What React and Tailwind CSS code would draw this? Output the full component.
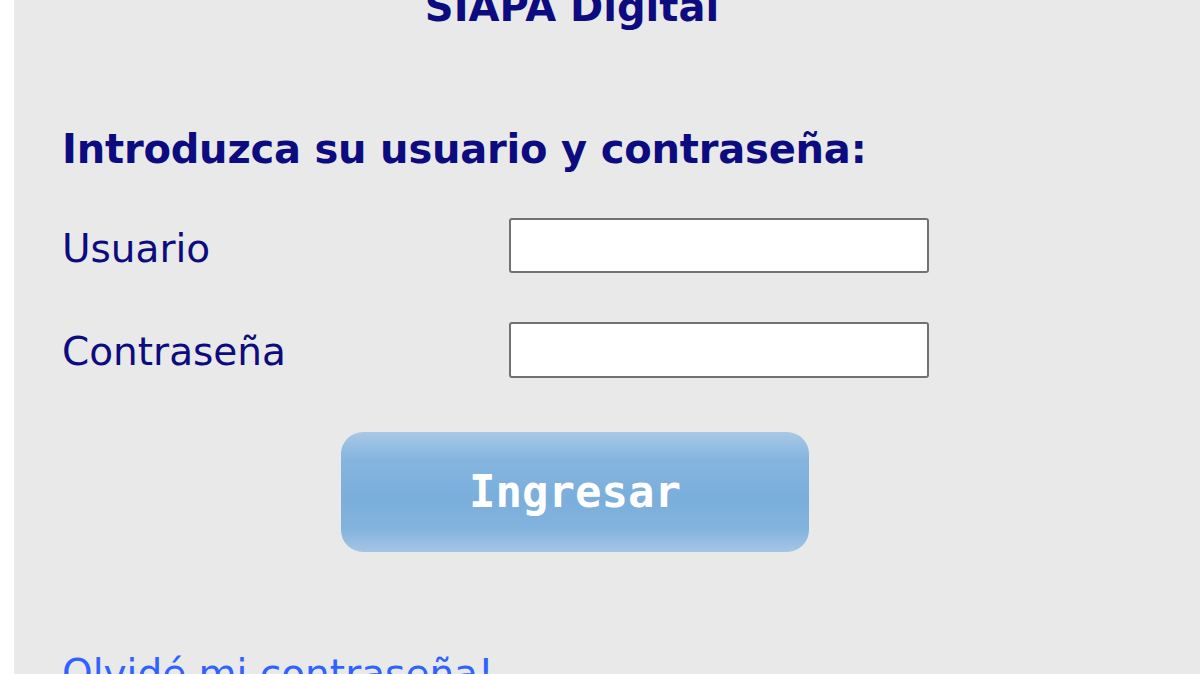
export default function App() {
  const sans = { fontFamily: '"DejaVu Sans", Verdana, sans-serif' };
  return (
    <div className="h-[674px] overflow-hidden bg-white pl-[14px]">
      <div className="flow-root h-full w-full bg-[#e9e9e9] pl-[48px]">
        <div className="w-[1020px]" style={sans}>
          <h1 className="mt-[-13px] text-center text-[40px] font-bold leading-none text-[#0c0c80]">
            SIAPA Digital
          </h1>
          <h2 className="mt-[102px] text-[40px] font-bold leading-none tracking-[-0.2px] text-[#0c0c80]">
            Introduzca su usuario y contraseña:
          </h2>
          <div className="mt-[49px] flex h-[55px] items-start">
            <label className="mt-[11px] w-[447px] text-[39px] leading-none text-[#0c0c80]">Usuario</label>
            <input
              type="text"
              className="h-[55px] w-[420px] rounded-[3px] border-2 border-[#727272] bg-white px-2 text-[30px] outline-none"
            />
          </div>
          <div className="mt-[49px] flex h-[56px] items-start">
            <label className="mt-[10px] w-[447px] text-[39px] leading-none text-[#0c0c80]">Contraseña</label>
            <input
              type="password"
              className="h-[56px] w-[420px] rounded-[3px] border-2 border-[#727272] bg-white px-2 text-[30px] outline-none"
            />
          </div>
          <button
            className="ml-[279px] mt-[54px] flex h-[120px] w-[468px] items-center justify-center rounded-[22px] bg-[linear-gradient(to_bottom,#a9c8e6_0%,#86b6df_22%,#7aaedb_55%,#82b3dd_80%,#a5c5e6_100%)] text-[44px] font-bold text-white"
            style={{ fontFamily: '"DejaVu Sans Mono", monospace' }}
          >
            Ingresar
          </button>
          <a href="#" className="mt-[102px] block text-[39px] leading-none text-[#2f62ff]">
            Olvidé mi contraseña!
          </a>
        </div>
      </div>
    </div>
  );
}
